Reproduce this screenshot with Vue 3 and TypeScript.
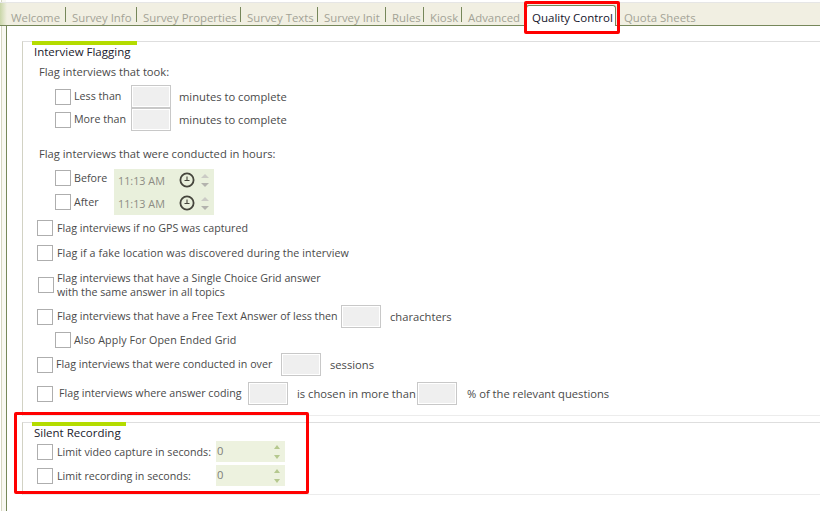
<script setup lang="ts">
const tabs = [
  { label: "Welcome", width: 55 },
  { label: "Survey Info", width: 71 },
  { label: "Survey Properties", width: 104 },
  { label: "Survey Texts", width: 77 },
  { label: "Survey Init", width: 68 },
  { label: "Rules", width: 38 },
  { label: "Kiosk", width: 38 },
]
</script>

<template>
  <div class="page">
    <div class="tabs">
      <span v-for="t in tabs" :key="t.label" class="tab" :style="{ width: t.width + 'px' }">{{ t.label }}</span>
      <span class="tab plain">Advanced</span>
      <span class="tab active">Quality Control</span>
      <span class="tab last">Quota Sheets</span>
    </div>

    <div class="panel">
      <section class="group first">
        <h3 class="title bar-long">Interview Flagging</h3>
        <p class="sub">Flag interviews that took:</p>
        <div class="row took">
          <span class="check"></span><span class="lbl w57">Less than</span><span class="box"></span>
          <span class="txt ml8">minutes to complete</span>
        </div>
        <div class="row took">
          <span class="check"></span><span class="lbl w57">More than</span><span class="box"></span>
          <span class="txt ml8">minutes to complete</span>
        </div>

        <p class="sub hours">Flag interviews that were conducted in hours:</p>
        <div class="hours-row">
          <div class="hour-labels">
            <div class="hour-label"><span class="check"></span><span class="lbl">Before</span></div>
            <div class="hour-label"><span class="check"></span><span class="lbl">After</span></div>
          </div>
          <div class="times">
            <div v-for="n in 2" :key="n" class="time">
              <span class="time-val">11:13 AM</span>
              <svg class="clock" width="16" height="16" viewBox="0 0 16 16">
                <circle cx="8" cy="8" r="6.6" fill="none" stroke="#45453c" stroke-width="1.8" />
                <path d="M8 4.5V8.5M5.5 8.5H10.5" fill="none" stroke="#45453c" stroke-width="1.1" />
              </svg>
              <span class="spin">
                <i class="up"></i>
                <i class="down"></i>
              </span>
            </div>
          </div>
        </div>

        <div class="row flag gps"><span class="check"></span><span class="lbl ml4">Flag interviews if no GPS was captured</span></div>
        <div class="row flag fake"><span class="check"></span><span class="lbl ml4 wide">Flag if a fake location was discovered during the interview</span></div>
        <div class="row flag grid-row">
          <span class="check"></span>
          <span class="lbl two">Flag interviews that have a Single Choice Grid answer<br />with the same answer in all topics</span>
        </div>
        <div class="row flag free">
          <span class="check"></span><span class="lbl ml4 w284">Flag interviews that have a Free Text Answer of less then</span><span class="box"></span>
          <span class="txt ml9">charachters</span>
        </div>
        <div class="row also"><span class="check"></span><span class="lbl wide">Also Apply For Open Ended Grid</span></div>
        <div class="row flag over">
          <span class="check"></span><span class="lbl w225">Flag interviews that were conducted in over</span><span class="box"></span>
          <span class="txt ml9">sessions</span>
        </div>
        <div class="row flag coding">
          <span class="check"></span><span class="lbl w189">Flag interviews where answer coding</span><span class="box"></span>
          <span class="txt ml9 w120">is chosen in more than</span><span class="box"></span>
          <span class="txt ml10">% of the relevant questions</span>
        </div>
      </section>

      <section class="group second">
        <h3 class="title bar-short">Silent Recording</h3>
        <div class="row silent">
          <span class="check"></span><span class="lbl ml4 w159">Limit video capture in seconds:</span>
          <span class="num">0<span class="spin green"><i class="up"></i><i class="down"></i></span></span>
        </div>
        <div class="row silent">
          <span class="check"></span><span class="lbl ml4 w159">Limit recording in seconds:</span>
          <span class="num">0<span class="spin green"><i class="up"></i><i class="down"></i></span></span>
        </div>
      </section>
    </div>

    <div class="mark mark-tab"></div>
    <div class="mark mark-silent"></div>
  </div>
</template>

<style>
html,
body {
  margin: 0;
  background: #fff;
}
</style>

<style scoped>
.page {
  position: relative;
  width: 820px;
  height: 511px;
  overflow: hidden;
  background: linear-gradient(90deg, #fff 1px, #d6d6c2 1px, #d6d6c2 2px, #f8f8f2 2px, #f8f8f2 6px, #fff 6px);
  font-family: "Open Sans", "Noto Sans", sans-serif;
  font-size: 11.2px;
  color: #4a4a4a;
}

.tabs {
  display: flex;
  align-items: flex-start;
  box-sizing: border-box;
  height: 24px;
  margin-top: 2px;
  padding-left: 11px;
  background: linear-gradient(90deg, #c9d6a8, #f1efe2 7px);
  border-bottom: 1px solid #76875a;
  border-top: 1px solid #e6e6e6;
  font-size: 11.4px;
}

.tab {
  box-sizing: border-box;
  flex: none;
  height: 15px;
  margin-top: 4px;
  padding-left: 6px;
  line-height: 22px;
  color: #a3a396;
  white-space: nowrap;
  border-right: 1px solid #76875a;
}

.tab:first-child {
  padding-left: 0;
}

.tab.plain {
  width: 64px;
  border-right: none;
}

.tab.active {
  position: relative;
  width: 90px;
  height: 21px;
  margin-top: 2px;
  padding-left: 5px;
  font-size: 11.5px;
  line-height: 24px;
  color: #14142a;
  background: #fff;
  border: 1px solid #76875a;
  border-bottom: none;
  border-radius: 3px 3px 0 0;
}

.tab.last {
  margin-left: 2px;
  border-right: none;
}

.panel {
  box-sizing: border-box;
  height: 485px;
  margin-left: 6px;
  padding: 15px 0 0 15px;
  background: #fff;
  border-left: 1px solid #76875a;
}

.group {
  border-top: 1px solid #dedede;
  border-left: 1px solid #d2d2c4;
}

.first {
  height: 373px;
  border-bottom: 1px solid #ececec;
}

.second {
  height: 71px;
  margin-top: 6px;
  border-bottom: 1px solid #ececec;
}

.title {
  box-sizing: border-box;
  height: 23px;
  margin: -1px 0 0 9px;
  padding: 0 0 0 2px;
  font-size: 11.5px;
  font-weight: 400;
  line-height: 14px;
  color: #20202c;
  border-top: 4px solid #b4dc00;
}

.bar-long {
  width: 105px;
}

.bar-short {
  width: 94px;
  height: 16px;
  white-space: nowrap;
}

.sub {
  margin: 0 0 5px 16px;
  line-height: 16px;
}

.sub.hours {
  margin-top: 15px;
  margin-bottom: 7px;
}

.row {
  display: flex;
  align-items: center;
}

.took {
  height: 23px;
  margin-left: 32px;
}

.check {
  box-sizing: border-box;
  flex: none;
  width: 16px;
  height: 16px;
  background: #fff;
  border: 1px solid #aeaeae;
}

.lbl {
  flex: none;
  margin-top: -1px;
  margin-left: 3px;
  font-size: 10.7px;
  white-space: nowrap;
}

.lbl.two {
  margin-top: 0;
  line-height: 14px;
}

.wide {
  letter-spacing: 0.1px;
}

.ml4 {
  margin-left: 4px;
}

.w57 {
  width: 57px;
}

.w284 {
  width: 284px;
}

.w225 {
  width: 225px;
}

.w189 {
  width: 189px;
  margin-left: 6px;
}

.w159 {
  width: 159px;
  margin-top: 1px;
}

.box {
  box-sizing: border-box;
  flex: none;
  width: 40px;
  height: 23px;
  background: #efefef;
  border: 1px solid #c8c8c8;
  box-shadow: inset 0 0 0 1px #fff;
}

.txt {
  flex: none;
  white-space: nowrap;
}

.ml8 {
  margin-left: 8px;
}

.ml9 {
  margin-left: 9px;
}

.ml10 {
  margin-left: 10px;
}

.w120 {
  width: 120px;
}

.hours-row {
  display: flex;
  height: 46px;
  margin-left: 32px;
}

.hour-labels {
  width: 59px;
}

.hour-label {
  display: flex;
  align-items: center;
  height: 16px;
  margin: 1px 0 8px;
}

.times {
  box-sizing: border-box;
  width: 100px;
  height: 46px;
  padding-left: 4px;
  background: #e9f0dc;
}

.time {
  display: flex;
  align-items: center;
  height: 23px;
  font-size: 10.8px;
  color: #8d8d84;
}

.time-val {
  width: 61px;
  margin-top: -1px;
}

.clock {
  flex: none;
  margin-top: -1px;
}

.spin {
  display: flex;
  flex-direction: column;
  gap: 5px;
  margin-left: 6px;
}

.spin i {
  display: block;
  width: 0;
  height: 0;
  border-left: 4px solid transparent;
  border-right: 4px solid transparent;
}

.spin .up {
  border-bottom: 4px solid #cbcbc5;
}

.spin .down {
  border-top: 4px solid #b3b3ad;
}

.flag {
  margin-left: 14px;
}

.gps {
  height: 16px;
  margin-top: 5px;
}

.fake {
  height: 16px;
  margin-top: 9px;
}

.grid-row {
  height: 28px;
  margin-top: 10px;
  margin-left: 15px;
}

.free {
  height: 23px;
  margin-top: 6px;
}

.also {
  height: 16px;
  margin: 4px 0 0 32px;
}

.over {
  height: 23px;
  margin-top: 5px;
}

.coding {
  height: 23px;
  margin-top: 6px;
}

.silent {
  height: 21px;
  margin-top: 3px;
  margin-left: 14px;
}

.num {
  display: flex;
  align-items: center;
  justify-content: space-between;
  box-sizing: border-box;
  width: 69px;
  height: 21px;
  padding: 0 5px 2px 1px;
  color: #7f7f78;
  background: #edf2df;
}

.spin.green {
  gap: 6px;
  margin-top: 2px;
}

.spin.green i {
  border-left-width: 3px;
  border-right-width: 3px;
}

.spin.green .up {
  border-bottom-color: #b5c88e;
}

.spin.green .down {
  border-top-color: #b5c88e;
}

.mark {
  position: absolute;
  box-sizing: border-box;
  border: 3px solid #f00;
  border-radius: 2px;
}

.mark-tab {
  left: 524px;
  top: 1px;
  width: 96px;
  height: 33px;
}

.mark-silent {
  left: 14px;
  top: 412px;
  width: 295px;
  height: 82px;
}
</style>
